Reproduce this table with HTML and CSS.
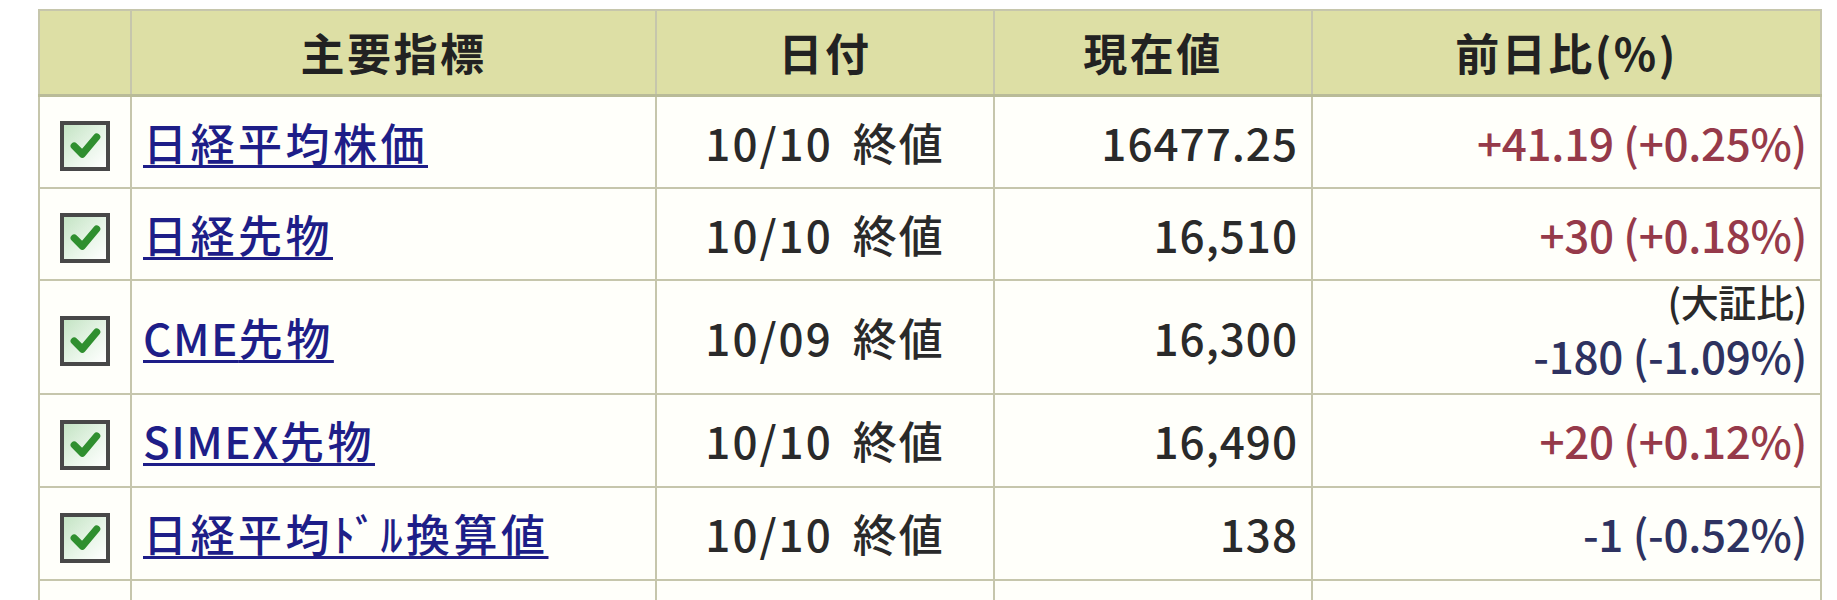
FILE: index.html
```html
<!DOCTYPE html>
<html lang="ja">
<head>
<meta charset="utf-8">
<title>主要指標</title>
<link rel="stylesheet" href="styles.css">
</head>
<body>
<table class="idx">
  <colgroup>
    <col class="c-chk"><col class="c-name"><col class="c-date"><col class="c-val"><col class="c-chg">
  </colgroup>
  <thead>
    <tr class="head">
      <th></th><th>主要指標</th><th>日付</th><th>現在値</th><th>前日比(%)</th>
    </tr>
  </thead>
  <tbody>
    <tr class="r">
      <td class="chk"><span class="box"><svg viewBox="0 0 40 40" class="tick"><path d="M8 20 L17 29 L33 10" /></svg></span></td>
      <td class="name"><a href="#">日経平均株価</a></td>
      <td class="date">10/10 終値</td>
      <td class="val">16477.25</td>
      <td class="chg up">+41.19 (+0.25%)</td>
    </tr>
    <tr class="r">
      <td class="chk"><span class="box"><svg viewBox="0 0 40 40" class="tick"><path d="M8 20 L17 29 L33 10" /></svg></span></td>
      <td class="name"><a href="#">日経先物</a></td>
      <td class="date">10/10 終値</td>
      <td class="val">16,510</td>
      <td class="chg up">+30 (+0.18%)</td>
    </tr>
    <tr class="r tall">
      <td class="chk"><span class="box"><svg viewBox="0 0 40 40" class="tick"><path d="M8 20 L17 29 L33 10" /></svg></span></td>
      <td class="name"><a href="#"><span class="lat">CME</span>先物</a></td>
      <td class="date">10/09 終値</td>
      <td class="val">16,300</td>
      <td class="chg down two"><div class="note">(大証比)</div><div class="line2">-180 (-1.09%)</div></td>
    </tr>
    <tr class="r r4">
      <td class="chk"><span class="box"><svg viewBox="0 0 40 40" class="tick"><path d="M8 20 L17 29 L33 10" /></svg></span></td>
      <td class="name"><a href="#"><span class="lat">SIMEX</span>先物</a></td>
      <td class="date">10/10 終値</td>
      <td class="val">16,490</td>
      <td class="chg up">+20 (+0.12%)</td>
    </tr>
    <tr class="r r4">
      <td class="chk"><span class="box"><svg viewBox="0 0 40 40" class="tick"><path d="M8 20 L17 29 L33 10" /></svg></span></td>
      <td class="name"><a href="#">日経平均ﾄﾞﾙ換算値</a></td>
      <td class="date">10/10 終値</td>
      <td class="val">138</td>
      <td class="chg down">-1 (-0.52%)</td>
    </tr>
    <tr class="r">
      <td></td><td></td><td></td><td></td><td></td>
    </tr>
  </tbody>
</table>
</body>
</html>
```

FILE: styles.css
```css
html, body {
  margin: 0;
  padding: 0;
  background: #ffffff;
}
body {
  padding: 9px 0 0 38px;
  font-family: "Noto Sans CJK JP", "Noto Sans", sans-serif;
  font-size: 44px;
  font-weight: 500;
  color: #2a2a2a;
}
.idx {
  border-collapse: collapse;
  table-layout: fixed;
  width: 1782px;
  background: #fffffa;
}
.c-chk { width: 92px; }
.c-name { width: 525px; }
.c-date { width: 338px; }
.c-val { width: 318px; }
.c-chg { width: 509px; }

.idx th, .idx td {
  border: 2px solid #c6c6ac;
  padding: 0;
  vertical-align: middle;
  line-height: 1.2;
}
.head th {
  height: 83px;
  background: #dddfa5;
  font-weight: 700;
  color: #222222;
  text-align: center;
  letter-spacing: 2.5px;
  border-bottom: 3px solid #b9bb98;
}
.r td { height: 90px; }
.r.tall td { height: 112px; }
.r.r4 td { height: 91px; }

.chk { text-align: center; }
.box {
  display: inline-flex;
  align-items: center;
  justify-content: center;
  box-sizing: border-box;
  width: 50px;
  height: 50px;
  border: 4px solid #484848;
  background: linear-gradient(135deg, #c4e4c4 0%, #eaf6ea 60%, #ffffff 100%);
  vertical-align: middle;
}
.tick {
  width: 36px;
  height: 36px;
}
.tick path {
  fill: none;
  stroke: #2f8f2f;
  stroke-width: 8;
  stroke-linecap: round;
  stroke-linejoin: round;
}
.name { padding-left: 11px !important; }
.name a {
  color: #1e1e88;
  text-decoration: underline;
  text-decoration-thickness: 3px;
  text-underline-offset: 4px;
  letter-spacing: 3.5px;
  white-space: nowrap;
}
.name a .lat {
  letter-spacing: 1.5px;
}
.date {
  text-align: center;
  white-space: nowrap;
  letter-spacing: 2px;
  word-spacing: 8px;
}
.val {
  text-align: right;
  padding-right: 13px !important;
  letter-spacing: 1px;
}
.chg {
  text-align: right;
  padding-right: 13px !important;
  white-space: nowrap;
  letter-spacing: -0.3px;
}
.up { color: #963a4a; }
.down { color: #2e3260; }
.chg.two {
  vertical-align: top;
}
.note {
  font-size: 38px;
  line-height: 40px;
  color: #2a2a2a;
}
.line2 {
  line-height: 68px;
}
```
